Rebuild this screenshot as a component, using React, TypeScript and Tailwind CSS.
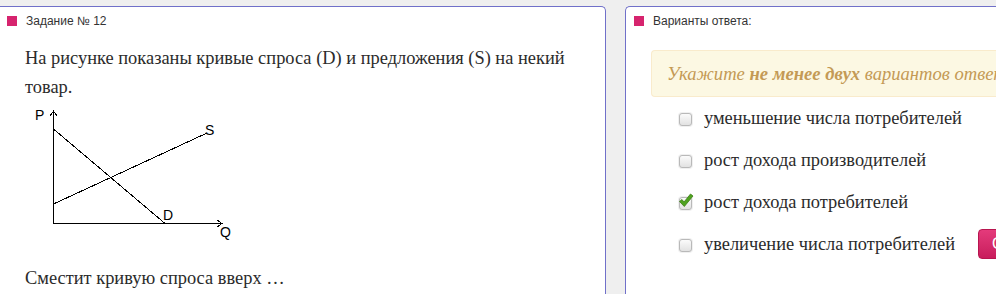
import React from "react";

const serif = { fontFamily: '"Liberation Serif", "Times New Roman", serif' };
const sans = { fontFamily: '"Liberation Sans", Arial, sans-serif' };

function Header({ title }: { title: string }) {
  return (
    <div className="flex h-[28px] items-center gap-[9px]" style={sans}>
      <div className="h-[10px] w-[10px] bg-[#d6246e]" />
      <span className="text-[12px] text-[#333]">{title}</span>
    </div>
  );
}

function Graph() {
  return (
    <svg width="220" height="140" viewBox="0 0 220 140" className="block" shapeRendering="crispEdges">
      <g stroke="#000" strokeWidth="1" fill="none">
        <line x1="28.5" y1="7" x2="28.5" y2="119.5" />
        <polyline points="25,12 28.5,7 32,12" />
        <line x1="28.5" y1="119.5" x2="197" y2="119.5" />
        <polyline points="192,116 197,119.5 192,123" />
        <line x1="28.5" y1="25" x2="140" y2="119.5" />
        <line x1="28.5" y1="100" x2="182" y2="29" />
      </g>
      <g fill="#000" fontSize="14" style={sans}>
        <text x="10" y="16">P</text>
        <text x="180" y="31">S</text>
        <text x="138" y="116">D</text>
        <text x="195" y="133">Q</text>
      </g>
    </svg>
  );
}

function Box({ checked }: { checked?: boolean }) {
  return (
    <div className="relative h-[15px] w-[15px] shrink-0 rounded-[4px] bg-[#f0f0f0] p-[1px]">
      <div className="h-full w-full rounded-[3px] border border-[#b9b9b9] bg-gradient-to-b from-[#fbfbfb] to-[#e2e2e2]" />
      {checked && (
        <svg className="absolute left-[0px] top-[-4px]" width="16" height="16" viewBox="0 0 16 16">
          <path
            d="M1.5 9.5 L4 7.5 L6 10 L12.5 2 L15 4 L6.3 14.5 Z"
            fill="#4ea21f"
            stroke="#3b7f14"
            strokeWidth="0.8"
            strokeLinejoin="round"
          />
        </svg>
      )}
    </div>
  );
}

const answers = [
  { t: "уменьшение числа потребителей" },
  { t: "рост дохода производителей" },
  { t: "рост дохода потребителей", c: true },
  { t: "увеличение числа потребителей" },
];

export default function App() {
  return (
    <div className="flex h-[294px] w-[996px] overflow-hidden bg-[#efefef] pt-[6px]">
      <div className="h-[300px] w-[606px] shrink-0 rounded-tr-[5px] border-r border-t border-[#7070c9] bg-white">
        <div className="pl-[7px]">
          <Header title="Задание № 12" />
        </div>
        <div className="pl-[25px] text-[18.4px] leading-[29px] text-[#2b2b2b]" style={serif}>
          <p className="mt-[9px] w-[560px]">
            На рисунке показаны кривые спроса (D) и предложения (S) на некий товар.
          </p>
          <div className="mt-[2px]">
            <Graph />
          </div>
          <p className="mt-[20px]">Сместит кривую спроса вверх …</p>
        </div>
      </div>
      <div className="ml-[19px] h-[300px] w-[420px] shrink-0 rounded-tl-[5px] border-l border-t border-[#7070c9] bg-white">
        <div className="pl-[8px]">
          <Header title="Варианты ответа:" />
        </div>
        <div className="ml-[25px] mt-[15px] flex h-[47px] items-center whitespace-nowrap rounded-l-[4px] border border-r-0 border-[#f9ebcc] bg-[#fcf8e3] pl-[15px] text-[18.6px] italic text-[#c49a55]" style={serif}>
          <span>
            Укажите <b>не менее двух</b> вариантов ответа:
          </span>
        </div>
        <div className="mt-[1px] flex">
          <div className="w-[352px] shrink-0 pl-[52px]">
            {answers.map((a) => (
              <div key={a.t} className="flex h-[42px] items-center gap-[11px] whitespace-nowrap text-[18.4px] text-[#2b2b2b]" style={serif}>
                <Box checked={a.c} />
                <span>{a.t}</span>
              </div>
            ))}
          </div>
          <div className="flex shrink-0 flex-col justify-end pb-[7px]">
            <button
              className="h-[30px] rounded-[4px] border border-[#b8154f] bg-gradient-to-b from-[#e43a7b] to-[#c81c5c] pl-[13px] pr-[14px] text-[16px] text-white"
              style={sans}
            >
              Ответить!
            </button>
          </div>
        </div>
      </div>
    </div>
  );
}
